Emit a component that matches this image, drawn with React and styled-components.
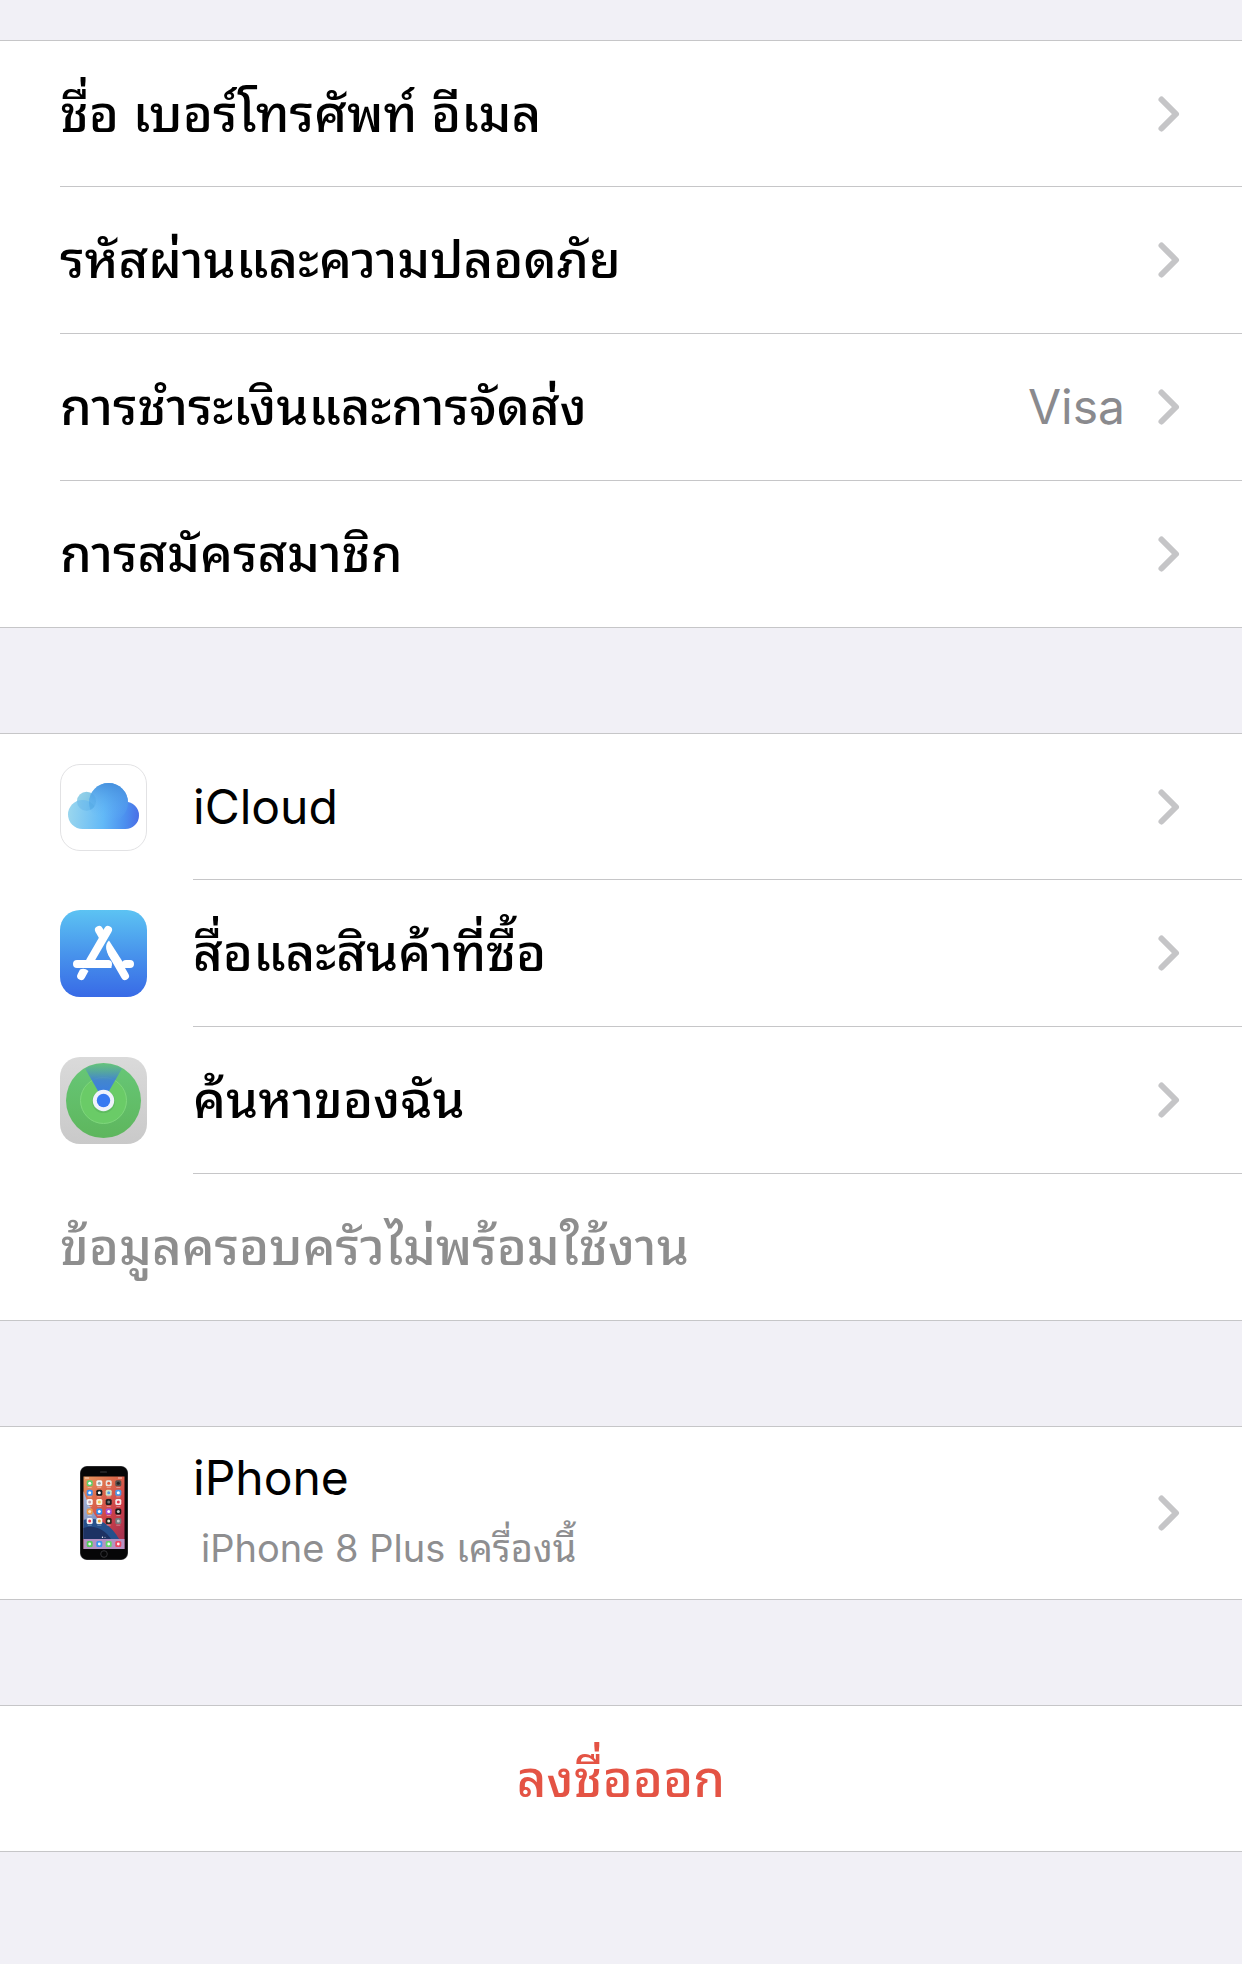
import React from 'react';
import styled, { createGlobalStyle } from 'styled-components';

const GlobalStyle = createGlobalStyle`
  * {
    box-sizing: border-box;
  }
  body {
    margin: 0;
    background: #f1f0f6;
    font-family: Inter, 'Noto Sans Thai Looped', Sarabun, Loma, 'Noto Sans', sans-serif;
    color: #000;
  }
`;

const Page = styled.main`
  display: flex;
  flex-direction: column;
  gap: 105px;
  padding: 40px 0 112px;
`;

const Group = styled.ul`
  margin: 0;
  padding: 0;
  list-style: none;
  background: #fff;
  border-top: 1px solid #c6c6c8;
  border-bottom: 1px solid #c6c6c8;
`;

const Row = styled.a`
  display: flex;
  align-items: center;
  gap: 46px;
  padding-left: 60px;
  color: inherit;
  text-decoration: none;
`;

const IconSlot = styled.span`
  display: flex;
  justify-content: center;
  flex: none;
  width: 87px;
`;

const Body = styled.span`
  display: flex;
  align-items: center;
  flex: 1;
  min-height: ${props => (props.$tall ? '172px' : '146px')};
  padding-right: 61px;

  li:not(:last-child) & {
    border-bottom: 1px solid #c6c6c8;
  }
  li:not(:first-child):not(:last-child) & {
    min-height: 147px;
  }
`;

const Texts = styled.span`
  display: flex;
  flex-direction: column;
  flex: 1;
  gap: 8px;
`;

const Label = styled.span`
  font-size: ${props => (props.$latin ? '48px' : '51px')};
  line-height: 62px;
  font-weight: ${props => (props.$latin ? 400 : 500)};
  color: ${props => (props.$muted ? '#8e8e8e' : 'inherit')};
`;

const SubLabel = styled.span`
  padding-left: 8px;
  font-size: 38px;
  line-height: 62px;
  color: #8e8e90;
`;

const Value = styled.span`
  margin-right: 32px;
  font-size: 48px;
  line-height: 62px;
  color: #8a8a8e;
`;

const SignOutButton = styled.button`
  display: block;
  width: 100%;
  min-height: 145px;
  padding: 0;
  border: 0;
  background: none;
  font-family: inherit;
  font-size: 51px;
  font-weight: 500;
  line-height: 62px;
  color: #e45344;
  cursor: pointer;
`;

const Chevron = () => (
  <svg width="24" height="38" viewBox="0 0 24 38" fill="none" aria-hidden="true">
    <path d="M4.5 4.5 19 19 4.5 33.500" stroke="#c5c5c7" strokeWidth="6" strokeLinecap="round" strokeLinejoin="round" />
  </svg>
);

const CloudIcon = () => (
  <svg width="87" height="87" viewBox="0 0 87 87" aria-hidden="true">
    <defs>
      <linearGradient id="cloudMain" gradientUnits="userSpaceOnUse" x1="8" y1="50" x2="79" y2="56">
        <stop offset="0" stopColor="#9ad6ee" />
        <stop offset="0.5" stopColor="#62b9f7" />
        <stop offset="0.8" stopColor="#4c90ef" />
        <stop offset="1" stopColor="#4a6ee6" />
      </linearGradient>
      <linearGradient id="cloudTop" x1="0.6" y1="0" x2="0.4" y2="1">
        <stop offset="0" stopColor="#468fdd" />
        <stop offset="0.9" stopColor="#60b2f5" stopOpacity="0" />
      </linearGradient>
      <linearGradient id="cloudSmall" x1="0" y1="0" x2="1" y2="0.6">
        <stop offset="0" stopColor="#9bd5ea" />
        <stop offset="1" stopColor="#74bfe4" />
      </linearGradient>
      <clipPath id="smallClip">
        <circle cx="26.500" cy="37.200" r="9.500" />
      </clipPath>
    </defs>
    <rect x="0.5" y="0.5" width="86" height="86" rx="19.500" fill="#fff" stroke="#e2e2e4" />
    <circle cx="26.500" cy="37.200" r="9.500" fill="url(#cloudSmall)" />
    <g fill="url(#cloudMain)">
      <circle cx="22.500" cy="50.500" r="14.500" />
      <circle cx="48.500" cy="38.500" r="19.500" />
      <circle cx="65.400" cy="51.400" r="13.600" />
      <path d="M22.500 46H65.400V65H22.500Z" />
    </g>
    <circle cx="48.500" cy="38.500" r="19.500" fill="url(#cloudTop)" />
    <g clipPath="url(#smallClip)" fill="#3f9bdc">
      <circle cx="22.500" cy="50.500" r="14.500" opacity="0.22" />
      <circle cx="48.500" cy="38.500" r="19.500" opacity="0.25" />
    </g>
  </svg>
);

const AppStoreIcon = () => (
  <svg width="87" height="87" viewBox="0 0 87 87" aria-hidden="true">
    <defs>
      <linearGradient id="store" x1="0" y1="0" x2="0" y2="1">
        <stop offset="0" stopColor="#5cc3f3" />
        <stop offset="0.5" stopColor="#4894ec" />
        <stop offset="1" stopColor="#386ae6" />
      </linearGradient>
    </defs>
    <rect width="87" height="87" rx="20" fill="url(#store)" />
    <g stroke="#fff" strokeWidth="8" strokeLinecap="round" fill="none">
      <path d="M48 20 30 51" />
      <path d="M39 20 43 27" />
      <path d="M17 54H48M66 54H70" />
      <path d="M52 43.500 65 66" />
    </g>
    <path d="M49 30.500C45.500 34 45 38 48.200 44.500L60 63L66 57Z" fill="#fff" />
    <path d="M20 59.500Q24.500 57.500 28.500 61L24.700 68A4 4 0 0 1 17.700 64Z" fill="#fff" />
    <path d="M48 50Q52 52 51.500 58H46Z" fill="#fff" />
  </svg>
);

const FindMyIcon = () => (
  <svg width="87" height="87" viewBox="0 0 87 87" aria-hidden="true">
    <defs>
      <linearGradient id="findBg" x1="0" y1="0" x2="0" y2="1">
        <stop offset="0" stopColor="#dadada" />
        <stop offset="1" stopColor="#c9c9c9" />
      </linearGradient>
      <linearGradient id="findGreen" x1="0" y1="0" x2="0" y2="1">
        <stop offset="0" stopColor="#67c777" />
        <stop offset="1" stopColor="#5eb65d" />
      </linearGradient>
      <linearGradient id="findBeam" x1="0" y1="0" x2="0" y2="1">
        <stop offset="0" stopColor="#4a90c0" stopOpacity="0.1" />
        <stop offset="0.45" stopColor="#3f7fd8" stopOpacity="0.9" />
        <stop offset="1" stopColor="#3478f0" />
      </linearGradient>
    </defs>
    <rect width="87" height="87" rx="20" fill="url(#findBg)" />
    <circle cx="43.500" cy="43.500" r="37.500" fill="url(#findGreen)" />
    <circle cx="43.500" cy="43.500" r="23" fill="#6acb67" stroke="#7fd77c" />
    <path d="M43.500 43.500 25 11.500A37 37 0 0 1 62 11.500Z" fill="url(#findBeam)" />
    <circle cx="43.500" cy="44.500" r="11.500" fill="#3b8f4a" opacity="0.25" />
    <circle cx="43.500" cy="43.500" r="10.700" fill="#eff2fb" />
    <circle cx="43.500" cy="43.500" r="6.700" fill="#3779f1" />
  </svg>
);

const homeApps = [
  ['#5fd068', '#f4f4f4', '#e8e3dc', '#55504e'],
  ['#3c8df0', '#17181a', '#cfe3c4', '#4c9be8'],
  ['#f6f6f8', '#fbf4dc', '#1d1d20', '#f5e9ea'],
  ['#f09a45', '#2f8ff2', '#a64fd6', '#18191b'],
  ['#f8f3f4', '#f3f5ee', '#28261f', '#77787c'],
];
const glyphs = [
  ['#fff', '#9aa0a0', '#e05a3a', '#222'],
  ['#fff', '#fff', '#5b9be0', '#fff'],
  ['#c9a0a8', '#f0c75a', '#777', '#e03a4c'],
  ['#fbe0c0', '#fff', '#fff', '#ccc'],
  ['#e8384f', '#e5a53c', '#e8e4d8', '#c8c8ca'],
];
const dockApps = ['#55cc5b', '#3c93ee', '#62d86b', '#ec4760'];
const columns = [8.7, 18.3, 27.7, 37.3];

const PhoneIcon = () => (
  <svg width="48" height="94" viewBox="-1 0 48 94" aria-hidden="true">
    <defs>
      <linearGradient id="wall" x1="0" y1="0" x2="0.6" y2="1">
        <stop offset="0" stopColor="#e8995f" />
        <stop offset="0.35" stopColor="#dc6a4c" />
        <stop offset="0.7" stopColor="#cc3f48" />
        <stop offset="1" stopColor="#a83450" />
      </linearGradient>
      <linearGradient id="wave" x1="0" y1="0" x2="0.6" y2="1">
        <stop offset="0" stopColor="#a9b8d8" />
        <stop offset="0.5" stopColor="#8a9cc8" />
        <stop offset="1" stopColor="#3a5f9c" />
      </linearGradient>
    </defs>
    <rect x="-1" width="48" height="94" rx="7" fill="#4a4b4f" />
    <rect x="-0.5" y="0.5" width="47" height="93" rx="6.500" fill="#060607" />
    <rect x="19" y="5.500" width="7" height="1" rx="0.5" fill="#3a3a3e" />
    <rect x="2.500" y="10.500" width="41" height="72.500" fill="url(#wall)" />
    <path d="M2.500 25C9 45 20 60 38 73H2.500Z" fill="url(#wave)" />
    <path d="M2.500 54C16 49 30 59 38 73H2.500Z" fill="#26508c" />
    <path d="M2.500 62C14 58 24 64 30 73H2.500Z" fill="#1d3263" />
    <path d="M4 12H8M37 12H41" stroke="#fff" strokeWidth="0.8" opacity="0.8" />
    {homeApps.map((row, r) =>
      row.map((color, c) => (
        <g key={r + '-' + c}>
          <rect x={columns[c] - 3} y={14.3 + r * 9.4} width="6" height="6" rx="1.500" fill={color} />
          <circle cx={columns[c]} cy={17.3 + r * 9.4} r="1.500" fill={glyphs[r][c]} />
          <rect x={columns[c] - 2} y={21.2 + r * 9.4} width="4" height="0.600" fill="#fff" opacity="0.6" />
        </g>
      ))
    )}
    <circle cx="21.500" cy="71.300" r="0.700" fill="#fff" />
    <circle cx="24" cy="71.300" r="0.600" fill="#fff" opacity="0.6" />
    <rect x="2.500" y="73" width="41" height="10" fill="#b592c4" />
    {dockApps.map((color, c) => (
      <g key={color}>
        <rect x={columns[c] - 3} y="75" width="6" height="6" rx="1.500" fill={color} />
        <circle cx={columns[c]} cy="78" r="1.400" fill="#fff" opacity="0.9" />
      </g>
    ))}
    <circle cx="23" cy="88" r="3.300" fill="none" stroke="#3c3c40" strokeWidth="0.8" />
  </svg>
);

const accountItems = [
  { id: 'name', label: 'ชื่อ เบอร์โทรศัพท์ อีเมล' },
  { id: 'password', label: 'รหัสผ่านและความปลอดภัย' },
  { id: 'payment', label: 'การชำระเงินและการจัดส่ง', value: 'Visa' },
  { id: 'subscriptions', label: 'การสมัครสมาชิก' },
];

const serviceItems = [
  { id: 'icloud', label: 'iCloud', latin: true, icon: <CloudIcon /> },
  { id: 'media', label: 'สื่อและสินค้าที่ซื้อ', icon: <AppStoreIcon /> },
  { id: 'findmy', label: 'ค้นหาของฉัน', icon: <FindMyIcon /> },
];

const SettingsRow = ({ item }) => (
  <li>
    <Row href={'#' + item.id}>
      {item.icon && <IconSlot>{item.icon}</IconSlot>}
      <Body $tall={!!item.detail}>
        <Texts>
          <Label $latin={item.latin}>{item.label}</Label>
          {item.detail && <SubLabel>{item.detail}</SubLabel>}
        </Texts>
        {item.value && <Value>{item.value}</Value>}
        <Chevron />
      </Body>
    </Row>
  </li>
);

const App = () => {
  return (
    <Page>
      <GlobalStyle />
      <Group>
        {accountItems.map(el => <SettingsRow key={el.id} item={el} />)}
      </Group>
      <Group>
        {serviceItems.map(el => <SettingsRow key={el.id} item={el} />)}
        <li>
          <Row as="div">
            <Body>
              <Label $muted>ข้อมูลครอบครัวไม่พร้อมใช้งาน</Label>
            </Body>
          </Row>
        </li>
      </Group>
      <Group>
        <SettingsRow
          item={{ id: 'iphone', label: 'iPhone', latin: true, detail: 'iPhone 8 Plus เครื่องนี้', icon: <PhoneIcon /> }}
        />
      </Group>
      <Group>
        <li>
          <SignOutButton type="button">ลงชื่อออก</SignOutButton>
        </li>
      </Group>
    </Page>
  );
};

export default App;
